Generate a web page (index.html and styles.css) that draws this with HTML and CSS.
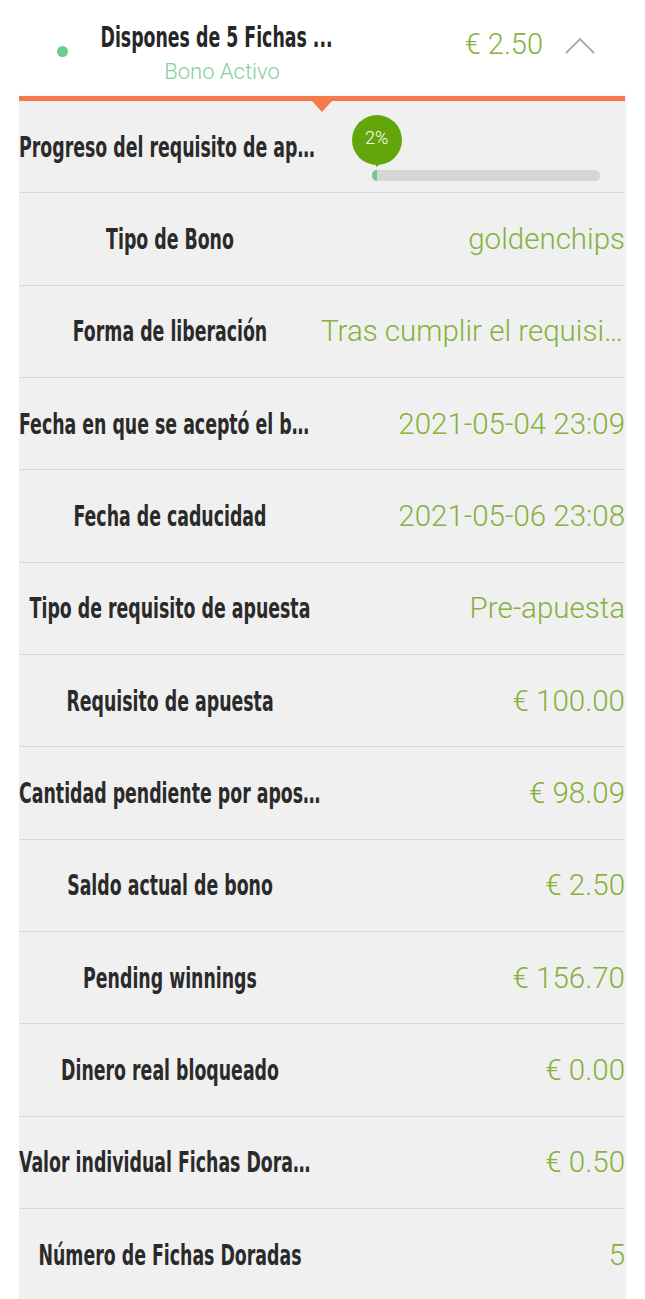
FILE: index.html
```html
<!DOCTYPE html>
<html lang="es">
<head>
  <meta charset="UTF-8">
  <meta name="viewport" content="width=device-width, initial-scale=1.0">
  <title>Bono Activo</title>
  <link rel="stylesheet" href="styles.css">
</head>
<body>
  <div class="bonus">
    <!-- cabecera del bono -->
    <div class="bonus-head">
      <span class="status-dot"></span>
      <div class="head-text">
        <div class="head-title"><span>Dispones de 5 Fichas ...</span></div>
        <div class="head-status">Bono Activo</div>
      </div>
      <div class="head-amount">€ 2.50</div>
      <svg class="head-arrow" width="30" height="17" viewBox="0 0 30 17">
        <polyline points="1,16 15,2 29,16" fill="none" stroke="#a8a8a8" stroke-width="1.8"/>
      </svg>
    </div>

    <div class="bonus-body">
      <div class="row progress-row">
        <div class="row-label"><span>Progreso del requisito de apuesta</span></div>
        <div class="row-value">
          <div class="progress-track">
            <div class="progress-fill" style="width: 2%"></div>
            <div class="progress-bubble" style="left: 2%">2%</div>
          </div>
        </div>
      </div>

      <div class="row">
        <div class="row-label"><span>Tipo de Bono</span></div>
        <div class="row-value">goldenchips</div>
      </div>
      <div class="row">
        <div class="row-label"><span>Forma de liberación</span></div>
        <div class="row-value">Tras cumplir el requisito de apuesta</div>
      </div>
      <div class="row">
        <div class="row-label"><span>Fecha en que se aceptó el bono</span></div>
        <div class="row-value">2021-05-04 23:09</div>
      </div>
      <div class="row">
        <div class="row-label"><span>Fecha de caducidad</span></div>
        <div class="row-value">2021-05-06 23:08</div>
      </div>
      <div class="row">
        <div class="row-label"><span>Tipo de requisito de apuesta</span></div>
        <div class="row-value">Pre-apuesta</div>
      </div>
      <div class="row">
        <div class="row-label"><span>Requisito de apuesta</span></div>
        <div class="row-value">€ 100.00</div>
      </div>
      <div class="row">
        <div class="row-label"><span>Cantidad pendiente por apostar</span></div>
        <div class="row-value">€ 98.09</div>
      </div>
      <div class="row">
        <div class="row-label"><span>Saldo actual de bono</span></div>
        <div class="row-value">€ 2.50</div>
      </div>
      <div class="row">
        <div class="row-label"><span>Pending winnings</span></div>
        <div class="row-value">€ 156.70</div>
      </div>
      <div class="row">
        <div class="row-label"><span>Dinero real bloqueado</span></div>
        <div class="row-value">€ 0.00</div>
      </div>
      <div class="row">
        <div class="row-label"><span>Valor individual Fichas Doradas</span></div>
        <div class="row-value">€ 0.50</div>
      </div>
      <div class="row">
        <div class="row-label"><span>Número de Fichas Doradas</span></div>
        <div class="row-value">5</div>
      </div>
    </div>
  </div>
</body>
</html>
```

FILE: styles.css
```css
* {
  box-sizing: border-box;
  margin: 0;
  padding: 0;
}

body {
  background: #fff;
  color: #2a2a2a;
  font-family: Roboto, 'Noto Sans', sans-serif;
  overflow: hidden;
}

.bonus {
  margin: 0 20px 0 19px;
}

/* cabecera */
.bonus-head {
  height: 96px;
  display: flex;
  align-items: center;
  padding: 0 30px 0 38px;
}

.status-dot {
  width: 11px;
  height: 11px;
  border-radius: 50%;
  background: #6dcb8c;
  margin-top: 6px;
  flex-shrink: 0;
}

.head-text {
  align-self: flex-start;
  width: 244px;
  margin-left: 27px;
  padding-top: 22px;
  text-align: center;
  white-space: nowrap;
}

/* fuente estrecha: DejaVu condensada comprimida en horizontal */
.head-title {
  display: flex;
  justify-content: center;
  font-family: 'DejaVu Sans Condensed', 'DejaVu Sans', sans-serif;
  font-weight: bold;
  font-size: 29px;
  line-height: 31px;
  color: #262626;
}

.head-title span {
  flex: none;
  transform: scaleX(0.665);
}

.head-status {
  margin-top: 4px;
  padding-left: 10px;
  font-size: 22px;
  font-weight: 300;
  line-height: 30px;
  color: #7fcf98;
}

.head-amount {
  margin-left: auto;
  margin-top: -9px;
  font-size: 29px;
  font-weight: 300;
  color: #86b13b;
}

.head-arrow {
  margin-left: 22px;
  margin-top: -6px;
}

/* cuerpo */
.bonus-body {
  position: relative;
  background: #f0f0f0;
  border-top: 5px solid #f47a4c;
  box-shadow: 1px 0 2px rgba(0,0,0,0.08);
}

.bonus-body::before {
  content: '';
  position: absolute;
  top: 0;
  left: 50%;
  transform: translateX(-50%);
  border-left: 10px solid transparent;
  border-right: 10px solid transparent;
  border-top: 11px solid #f47a4c;
}

.row {
  display: grid;
  grid-template-columns: 302px 1fr;
  align-items: center;
  height: 92.33px;
  border-bottom: 1px solid #d8d8d8;
}

.row-label {
  display: flex;
  justify-content: center;
  font-family: 'DejaVu Sans Condensed', 'DejaVu Sans', sans-serif;
  font-weight: bold;
  font-size: 29px;
  color: #2a2a2a;
}

.row-label span {
  flex: none;
  width: 454px;
  text-align: center;
  white-space: nowrap;
  overflow: hidden;
  text-overflow: ellipsis;
  transform: scaleX(0.665);
}

.row-value {
  text-align: right;
  white-space: nowrap;
  overflow: hidden;
  text-overflow: ellipsis;
  font-size: 29.5px;
  font-weight: 300;
  color: #86b13b;
}

/* barra de progreso */
.progress-row {
  align-items: end;
}

.progress-row .row-label {
  align-self: center;
}

.progress-row .row-value {
  overflow: visible;
  padding: 0 25px 11px 51px;
}

.progress-track {
  position: relative;
  height: 11px;
  border-radius: 6px;
  background: #d6d6d6;
}

.progress-fill {
  height: 100%;
  min-width: 5px;
  border-radius: 6px 0 0 6px;
  background: #72c98b;
}

.progress-bubble {
  position: absolute;
  bottom: 16px;
  width: 50px;
  height: 50px;
  margin-left: -25px;
  border-radius: 50%;
  background: #63a60c;
  color: #fff;
  font-size: 18px;
  font-weight: 300;
  line-height: 46px;
  text-align: center;
}

.progress-bubble::after {
  content: '';
  position: absolute;
  left: 50%;
  bottom: -2px;
  transform: translateX(-50%);
  border-left: 6px solid transparent;
  border-right: 6px solid transparent;
  border-top: 8px solid #63a60c;
}
```
